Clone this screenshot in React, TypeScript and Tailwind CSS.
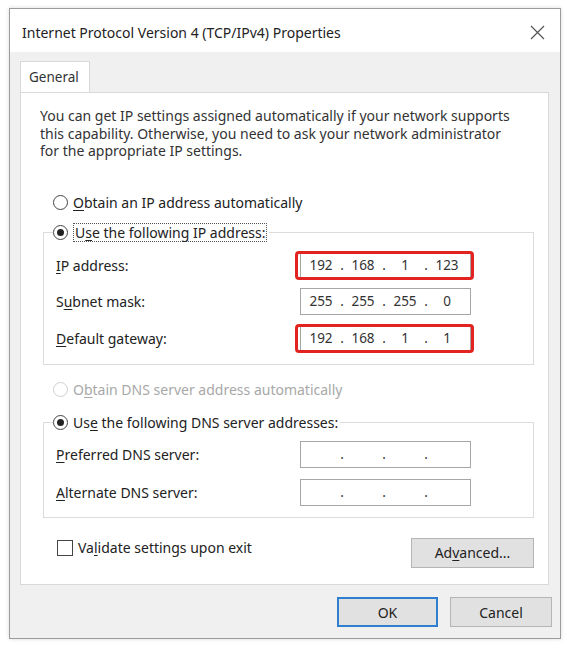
import React from "react";

const font = { fontFamily: '"Noto Sans", "Open Sans", Arial, sans-serif' };

function U({ children }: { children: React.ReactNode }) {
  return <span className="underline underline-offset-2 decoration-1">{children}</span>;
}

function Radio({ checked, disabled }: { checked?: boolean; disabled?: boolean }) {
  return (
    <span
      className={`inline-flex h-[15px] w-[15px] shrink-0 items-center justify-center rounded-full border bg-white ${
        disabled ? "border-[#cfcfcf]" : "border-[#444]"
      }`}
    >
      {checked && <span className="h-[7px] w-[7px] rounded-full bg-[#222]" />}
    </span>
  );
}

function IpBox({ values, red }: { values?: string[]; red?: boolean }) {
  const v = values ?? ["", "", "", ""];
  return (
    <div className="relative">
      <div className="flex h-[27px] w-[171px] items-center border border-[#a6a6a6] bg-white pl-[2px] text-[13.5px] text-[#333]">
        {v.map((s, i) => (
          <React.Fragment key={i}>
            <span className="w-[36px] text-center">{s}</span>
            {i < 3 && <span className="w-[6px] text-center">.</span>}
          </React.Fragment>
        ))}
      </div>
      {red && (
        <div className="pointer-events-none absolute -left-[5px] -right-[3px] -top-[1px] -bottom-[1px] rounded-[4px] border-[3px] border-[#e3231f]" />
      )}
    </div>
  );
}

function Row({ label, children }: { label: React.ReactNode; children: React.ReactNode }) {
  return (
    <div className="flex h-[27px] items-center">
      <div className="w-[256px] pl-[12px]">{label}</div>
      {children}
    </div>
  );
}

function Btn({ children, primary, w }: { children: React.ReactNode; primary?: boolean; w: string }) {
  return (
    <div
      className={`flex h-[30px] items-center justify-center bg-[#e1e1e1] text-[14px] text-[#222] ${w} ${
        primary ? "border-2 border-[#2f7fd0]" : "border border-[#b5b5b5]"
      }`}
    >
      {children}
    </div>
  );
}

export default function App() {
  return (
    <div className="h-[649px] w-[567px] bg-white pl-[9px] pt-[8px] text-[#222]" style={font}>
      <div className="flex h-[631px] w-[552px] flex-col border border-[#9c9c9c] bg-[#f0f0f0] shadow-[0_0_4px_rgba(0,0,0,0.15)]">
        {/* title bar */}
        <div className="flex h-[43px] shrink-0 items-center justify-between bg-white pl-[12px] pr-[15px] pt-[3px]">
          <span className="text-[14px] text-[#222]">Internet Protocol Version 4 (TCP/IPv4) Properties</span>
          <svg width="15" height="15" viewBox="0 0 15 15">
            <path d="M1 1 L14 14 M14 1 L1 14" stroke="#555" strokeWidth="1.2" fill="none" />
          </svg>
        </div>

        {/* body */}
        <div className="flex flex-col pl-[10px] pt-[9px]">
          {/* tab */}
          <div className="flex h-[31px] w-[70px] items-center border border-b-0 border-[#d9d9d9] bg-white pl-[8px] text-[13.5px] text-[#333]">
            General
          </div>

          {/* panel */}
          <div className="flex h-[493px] w-[529px] flex-col border border-[#d9d9d9] bg-white pl-[19px] pt-[14px] text-[14px]">
            <p className="w-[500px] leading-[17.5px] text-[#333]">
              You can get IP settings assigned automatically if your network supports
              <br />
              this capability. Otherwise, you need to ask your network administrator
              <br />
              for the appropriate IP settings.
            </p>

            <div className="mt-[33px] flex h-[20px] items-center gap-[5px] pl-[13px]">
              <Radio />
              <span>
                <U>O</U>btain an IP address automatically
              </span>
            </div>

            <fieldset className="ml-[3px] mt-[10px] w-[491px] border border-[#dcdcdc] px-0 pb-[12px] pt-[9px]">
              <legend className="ml-[9px] flex h-[20px] items-center gap-[5px] pr-[2px]">
                <Radio checked />
                <span className="border border-dotted border-[#555] px-[1px] leading-[17px]">
                  U<U>s</U>e the following IP address:
                </span>
              </legend>
              <div className="flex flex-col gap-[9.5px]">
                <Row
                  label={
                    <span>
                      <U>I</U>P address:
                    </span>
                  }
                >
                  <IpBox values={["192", "168", "1", "123"]} red />
                </Row>
                <Row
                  label={
                    <span>
                      S<U>u</U>bnet mask:
                    </span>
                  }
                >
                  <IpBox values={["255", "255", "255", "0"]} />
                </Row>
                <Row
                  label={
                    <span>
                      <U>D</U>efault gateway:
                    </span>
                  }
                >
                  <IpBox values={["192", "168", "1", "1"]} red />
                </Row>
              </div>
            </fieldset>

            <div className="mt-[15px] flex h-[20px] items-center gap-[5px] pl-[13px] text-[#a8a8a8]">
              <Radio disabled />
              <span>
                O<U>b</U>tain DNS server address automatically
              </span>
            </div>

            <fieldset className="ml-[3px] mt-[13px] w-[491px] border border-[#dcdcdc] px-0 pb-[11px] pt-[8px]">
              <legend className="ml-[9px] flex h-[20px] items-center gap-[5px] pr-[2px]">
                <Radio checked />
                <span className="leading-[17px]">
                  Us<U>e</U> the following DNS server addresses:
                </span>
              </legend>
              <div className="flex flex-col gap-[11px]">
                <Row
                  label={
                    <span>
                      <U>P</U>referred DNS server:
                    </span>
                  }
                >
                  <IpBox />
                </Row>
                <Row
                  label={
                    <span>
                      <U>A</U>lternate DNS server:
                    </span>
                  }
                >
                  <IpBox />
                </Row>
              </div>
            </fieldset>

            <div className="mt-[20px] flex w-[494px] items-start justify-between">
              <div className="flex h-[20px] items-center gap-[5px] pl-[17px]">
                <span className="h-[16px] w-[16px] border border-[#444] bg-white" />
                <span>
                  Va<U>l</U>idate settings upon exit
                </span>
              </div>
              <Btn w="w-[123px]">
                <span>
                  Ad<U>v</U>anced...
                </span>
              </Btn>
            </div>
          </div>

          {/* bottom buttons */}
          <div className="mt-[12px] flex w-[532px] justify-end gap-[12px]">
            <Btn primary w="w-[101px]">
              OK
            </Btn>
            <Btn w="w-[102px]">Cancel</Btn>
          </div>
        </div>
      </div>
    </div>
  );
}
